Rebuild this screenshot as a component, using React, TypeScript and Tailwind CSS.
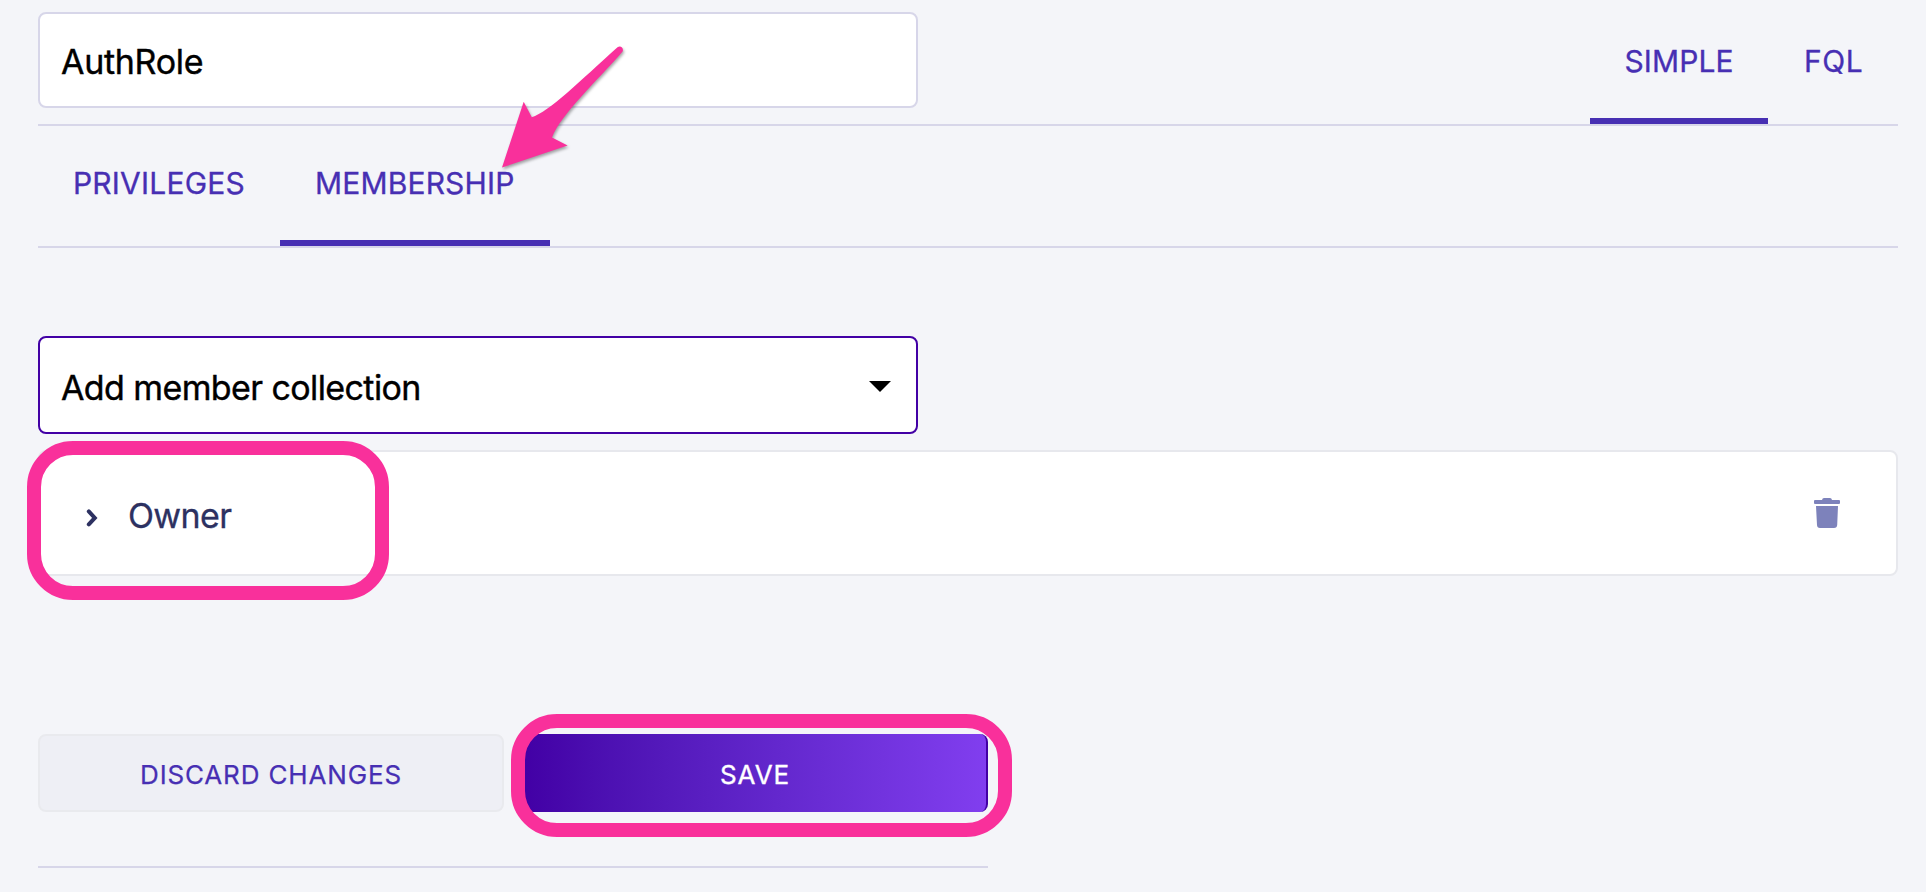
function Tab({ label, active, className }: { label: string; active?: boolean; className: string }) {
  return (
    <button
      className={`flex shrink-0 items-center whitespace-nowrap border-b-[6px] text-[30px] leading-none text-[#472fb3] [-webkit-text-stroke:0.3px_#472fb3] ${
        active ? "border-[#472fb3]" : "border-transparent"
      } ${className}`}
    >
      {label}
    </button>
  );
}

function Arrow() {
  return (
    <svg
      className="pointer-events-none absolute left-[490px] top-[36px] drop-shadow-[1px_2px_1.5px_rgba(0,0,0,0.35)]"
      width="150"
      height="145"
      viewBox="490 36 150 145"
      fill="#f9309b"
    >
      <path d="M502 167.6 L523.7 101.7 L531.8 117.2 C549 112 580 81 617.5 47.3 C620.5 44.8 624 48 622.6 51.5 C598 80 561 114 552 137.6 L567.6 145.4 Z" />
    </svg>
  );
}

export default function App() {
  return (
    <main className="relative h-[892px] w-[1926px] overflow-hidden bg-[#f4f5f9] pl-[38px] pr-[28px] font-['Inter',sans-serif]">
      <header className="flex h-[126px] justify-between border-b-2 border-[#d7d6e9]">
        <input
          readOnly
          value="AuthRole"
          className="mt-[12px] h-24 w-[880px] rounded-lg border-2 border-[#d7d6e9] bg-white pl-[21px] pt-[3px] text-[34px] tracking-[-0.3px] text-black outline-none [-webkit-text-stroke:0.4px_#000]"
        />
        <nav className="flex">
          <Tab label="SIMPLE" active className="w-[178px] pl-[34.5px] pt-[3px] tracking-[0.1px]" />
          <Tab label="FQL" className="w-[130px] pl-[36px] pt-[3px] tracking-[0.6px]" />
        </nav>
      </header>

      <nav className="flex h-[122px] border-b-2 border-[#d7d6e9]">
        <Tab label="PRIVILEGES" className="w-[242px] pl-[35px] tracking-[0.2px]" />
        <Tab label="MEMBERSHIP" active className="w-[270px] pl-[35px] tracking-[0.15px]" />
      </nav>

      <button className="mt-[88px] flex h-[98px] w-[880px] items-center justify-between rounded-lg border-2 border-[#4200a5] bg-white pl-[21px] pr-[25px] pt-[5px] text-[34px] leading-none tracking-[-0.6px] text-black [-webkit-text-stroke:0.4px_#000]">
        Add member collection
        <svg className="mb-[3px] h-[11px] w-[22px]" viewBox="0 0 22 11">
          <path d="M0 0H22L11 11Z" />
        </svg>
      </button>

      <section className="mt-4 flex h-[126px] items-center justify-between rounded-lg border-2 border-[#e7e8ed] bg-white pl-[46px] pr-[56px]">
        <div className="flex items-center pt-[5px] text-[34px] leading-none tracking-[-0.65px] text-[#2d3161] [-webkit-text-stroke:0.3px_#2d3161]">
          <svg className="mr-[30px] mt-[4px] h-[18px] w-3" viewBox="0 0 12 18" fill="none" stroke="#2d3161" strokeWidth="4" strokeLinecap="round" strokeLinejoin="miter">
            <path d="M2.8 2.4L8.8 8.9L2.8 15.4" />
          </svg>
          Owner
        </div>
        <svg className="h-[30px] w-[26px]" viewBox="0 0 26 30" fill="#7d82bb">
          <path d="M1 2H8Q8.4 0 10 0H16Q17.6 0 18 2H25Q26 2 26 3V5Q26 6 25 6H1Q0 6 0 5V3Q0 2 1 2ZM2 8H24L23.2 27Q23 30 20 30H6Q3.1 30 3 27Z" />
        </svg>
      </section>

      <div className="mt-[158px] flex h-[78px] w-[950px] gap-[18px] text-[26px]">
        <button className="flex-1 rounded-lg border-2 border-[#e9eaee] bg-[#eeeff5] pt-[3px] tracking-[0.85px] text-[#472fb3] [-webkit-text-stroke:0.25px_#472fb3]">
          DISCARD CHANGES
        </button>
        <button className="flex-1 rounded-lg border-x-2 border-[#4200a5] bg-linear-to-r from-[#4200a5] to-[#813eef] bg-origin-padding pt-[3px] tracking-[0.9px] text-white [-webkit-text-stroke:0.35px_#fff]">
          SAVE
        </button>
      </div>
      <hr className="mt-[54px] w-[950px] border-t-2 border-[#d7d6e9]" />

      <div className="pointer-events-none absolute left-[26.5px] top-[441px] h-[159px] w-[362px] rounded-[46px] border-[14px] border-[#f9309b]" />
      <div className="pointer-events-none absolute left-[511px] top-[714px] h-[123px] w-[501px] rounded-[46px] border-[14px] border-[#f9309b]" />
      <Arrow />
    </main>
  );
}
